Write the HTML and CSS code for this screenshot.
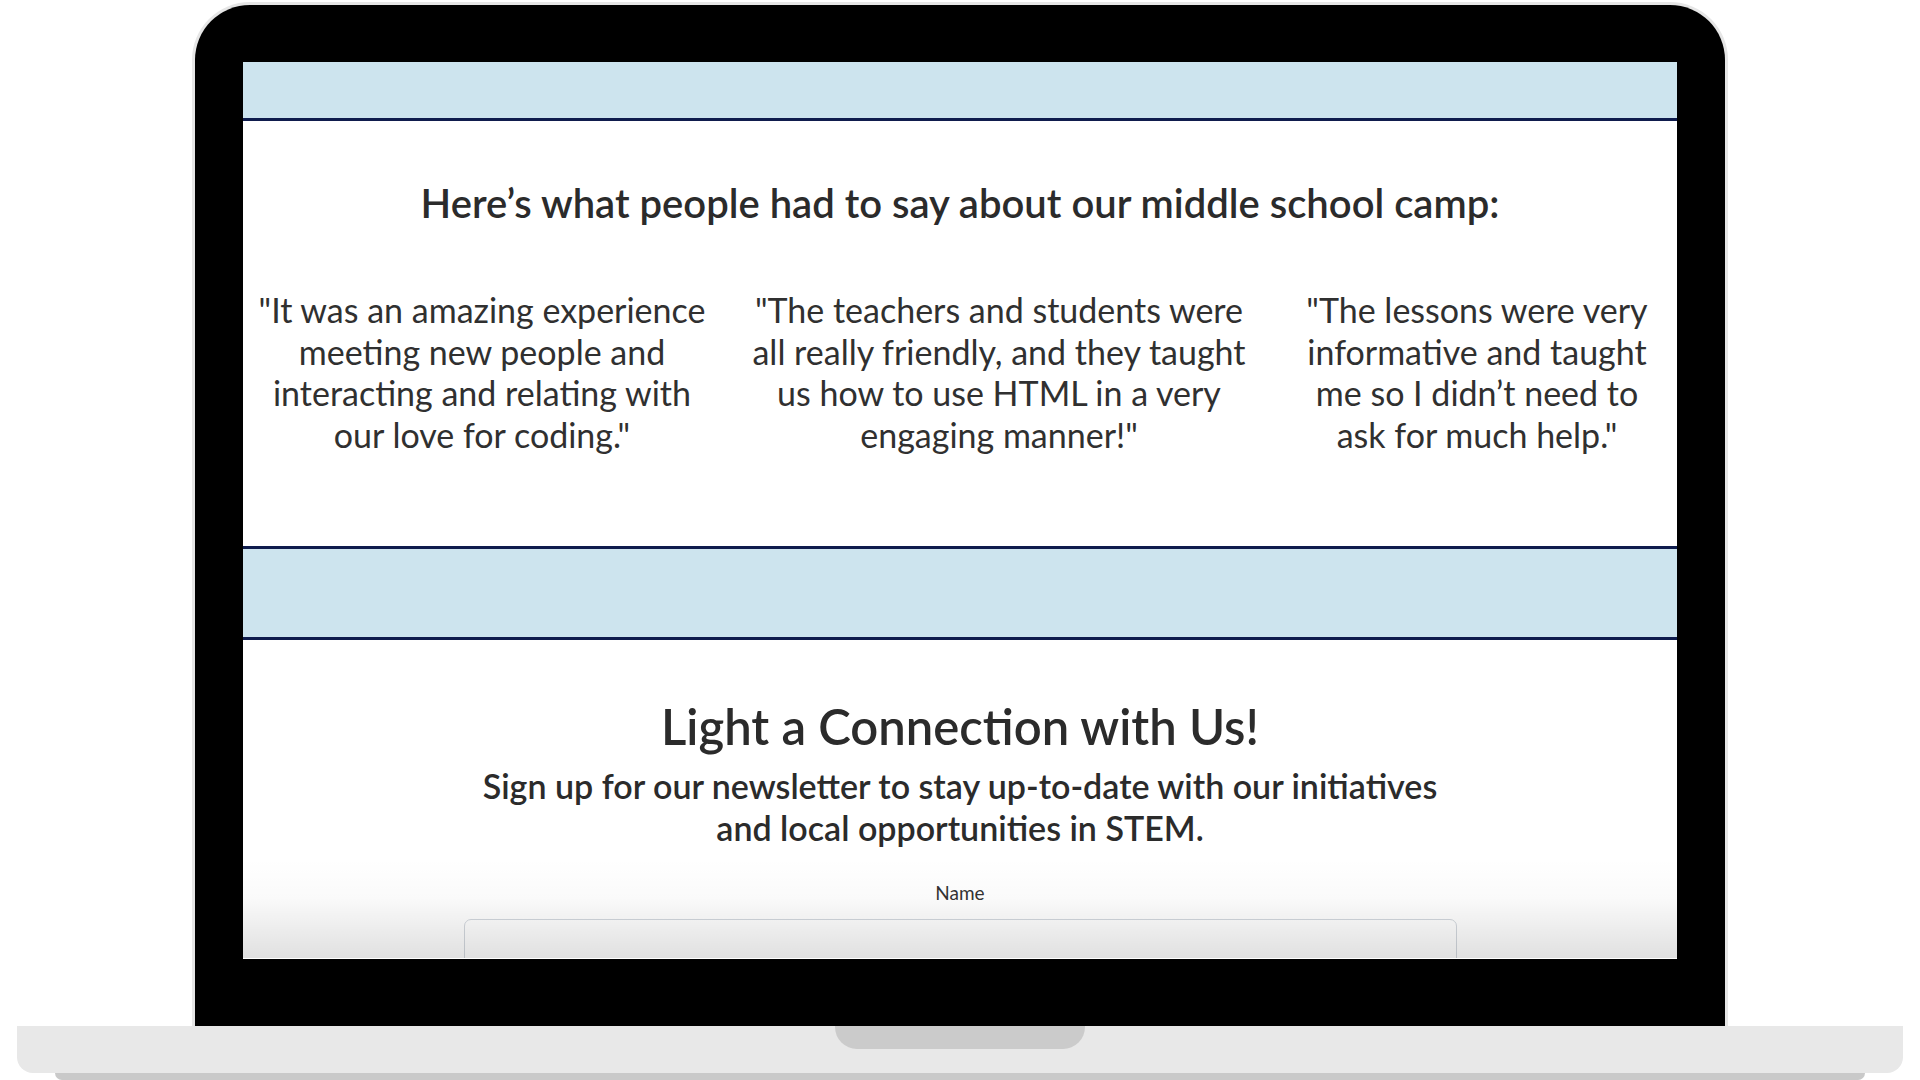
FILE: index.html
```html
<!DOCTYPE html>
<html lang="en">
<head>
<meta charset="utf-8">
<title>Middle School Camp</title>
<link rel="stylesheet" href="styles.css">
</head>
<body>
<div class="laptop">
  <div class="lid">
    <div class="screen">
      <div class="band band-top"></div>
      <section class="testimonials">
        <h2 class="testimonials-title">Here’s what people had to say about our middle school camp:</h2>
        <div class="quotes">
          <p class="quote">"It was an amazing experience<br>meeting new people and<br>interacting and relating with<br>our love for coding."</p>
          <p class="quote">"The teachers and students were<br>all really friendly, and they taught<br>us how to use HTML in a very<br>engaging manner!"</p>
          <p class="quote">"The lessons were very<br>informative and taught<br>me so I didn’t need to<br>ask for much help."</p>
        </div>
      </section>
      <div class="band band-mid"></div>
      <section class="newsletter">
        <h2 class="newsletter-title">Light a Connection with Us!</h2>
        <p class="newsletter-sub">Sign up for our newsletter to stay up-to-date with our initiatives<br>and local opportunities in STEM.</p>
        <form class="signup">
          <label class="field-label" for="name">Name</label>
          <input class="field-input" id="name" type="text">
        </form>
      </section>
      <div class="screen-fade"></div>
    </div>
  </div>
  <div class="base">
    <div class="notch"></div>
  </div>
  <div class="base-shadow"></div>
</div>
</body>
</html>
```

FILE: styles.css
```css
* { box-sizing: border-box; }

html, body {
  margin: 0;
  padding: 0;
  background: #ffffff;
  width: 1920px;
  height: 1080px;
  overflow: hidden;
}

body {
  font-family: "Lato", "Liberation Sans", sans-serif;
  color: #2e2e2e;
}

.laptop {
  display: flex;
  flex-direction: column;
  align-items: center;
  padding-top: 2px;
}

.lid {
  width: 1536px;
  background: #000;
  border: 3px solid #e6e6e6;
  border-bottom: none;
  border-radius: 58px 58px 0 0;
  padding: 57px 48px 67px 48px;
}

.screen {
  position: relative;
  width: 1434px;
  height: 897px;
  background: #fff;
  overflow: hidden;
  border-bottom: 1px solid #ffffff;
}

.band {
  background: #cde4ee;
}

.band-top {
  height: 59px;
  border-bottom: 3px solid #0f1c4d;
}

.band-mid {
  height: 94px;
  border-top: 3px solid #0f1c4d;
  border-bottom: 3px solid #0f1c4d;
}

.testimonials {
  height: 425px;
  padding-top: 58px;
}

.testimonials-title {
  margin: 0;
  text-align: center;
  font-size: 40px;
  line-height: 48px;
  font-weight: 600;
  color: #2b2b2b;
}

.quotes {
  display: grid;
  grid-template-columns: 478px 556px 400px;
  margin-top: 62px;
}

.quote {
  margin: 0;
  text-align: center;
  white-space: nowrap;
  font-size: 34px;
  line-height: 41.6px;
  font-weight: 400;
  color: #303030;
}

.newsletter {
  display: flex;
  flex-direction: column;
  align-items: center;
  padding-top: 58px;
}

.newsletter-title {
  margin: 0;
  font-size: 49px;
  line-height: 56px;
  font-weight: 600;
  color: #2b2b2b;
}

.newsletter-sub {
  margin: 11px 0 0 0;
  text-align: center;
  font-size: 34px;
  line-height: 42px;
  font-weight: 600;
  color: #2b2b2b;
}

.signup {
  display: flex;
  flex-direction: column;
  align-items: center;
  margin-top: 32px;
}

.field-label {
  font-size: 19px;
  line-height: 24px;
  color: #333;
}

.field-input {
  margin-top: 14px;
  width: 993px;
  height: 52px;
  border: 1px solid #d3d8de;
  border-radius: 7px;
  background: #fff;
}

.screen-fade {
  position: absolute;
  left: 0;
  right: 0;
  bottom: 0;
  height: 100px;
  background: linear-gradient(to bottom, rgba(0,0,0,0) 0%, rgba(0,0,0,0.02) 40%, rgba(0,0,0,0.12) 100%);
  pointer-events: none;
}

.base {
  position: relative;
  width: 1886px;
  height: 47px;
  background: #e8e8e8;
  border-radius: 0 0 16px 16px;
  display: flex;
  justify-content: center;
}

.notch {
  width: 250px;
  height: 23px;
  background: #cbcbcb;
  border-radius: 0 0 22px 22px;
}

.base-shadow {
  width: 1810px;
  height: 7px;
  background: #c9c9c9;
  border-radius: 0 0 10px 10px;
}
```
